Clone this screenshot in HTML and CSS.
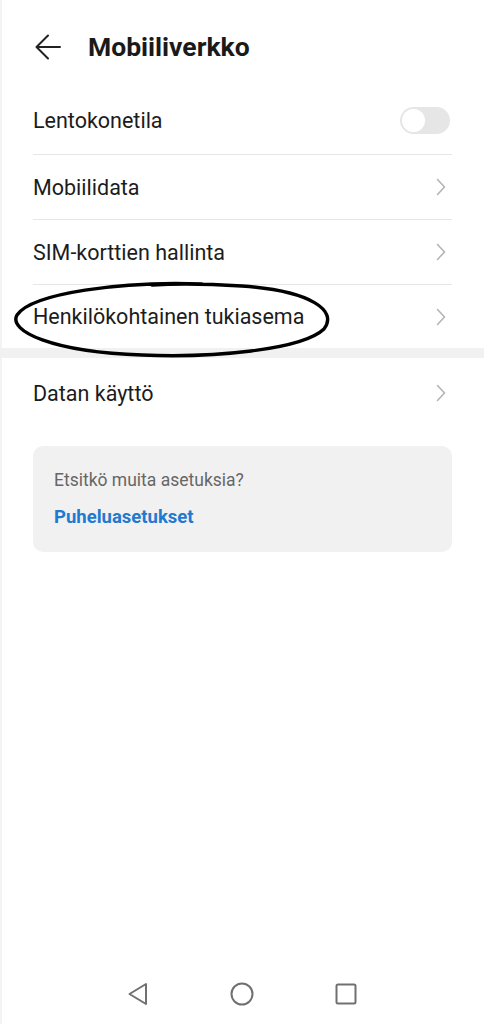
FILE: index.html
```html
<!DOCTYPE html>
<html lang="fi">
<head>
    <meta charset="UTF-8">
    <meta name="viewport" content="width=device-width, initial-scale=1.0">
    <title>Mobiiliverkko</title>
    <link rel="stylesheet" href="styles.css">
</head>
<body>
    <div class="screen">
        <div class="header">
            <svg class="back" width="26" height="26" viewBox="0 0 26 26">
                <path d="M25 13H2M13 1.5L1.5 13 13 24.5" fill="none" stroke="#222" stroke-width="2" stroke-linecap="round" stroke-linejoin="round"/>
            </svg>
            <h1>Mobiiliverkko</h1>
        </div>

        <div class="list">
            <div class="row first">
                <span>Lentokonetila</span>
                <div class="switch"><div class="knob"></div></div>
            </div>
            <div class="row">
                <span>Mobiilidata</span>
                <svg class="chev" width="10" height="18" viewBox="0 0 10 18"><path d="M1.5 1.5L8.5 9l-7 7.5" fill="none" stroke="#b4b4b4" stroke-width="1.6" stroke-linecap="round" stroke-linejoin="round"/></svg>
            </div>
            <div class="row">
                <span>SIM-korttien hallinta</span>
                <svg class="chev" width="10" height="18" viewBox="0 0 10 18"><path d="M1.5 1.5L8.5 9l-7 7.5" fill="none" stroke="#b4b4b4" stroke-width="1.6" stroke-linecap="round" stroke-linejoin="round"/></svg>
            </div>
            <div class="row last">
                <span>Henkilökohtainen tukiasema</span>
                <svg class="chev" width="10" height="18" viewBox="0 0 10 18"><path d="M1.5 1.5L8.5 9l-7 7.5" fill="none" stroke="#b4b4b4" stroke-width="1.6" stroke-linecap="round" stroke-linejoin="round"/></svg>
                <!-- hand drawn mark over the row -->
                <svg class="circle-mark" width="322" height="78" viewBox="0 0 322 78">
                    <path d="M190 3C110 0 20 12 5 34C-4 50 40 71 130 74C200 77 290 69 312 48C326 30 300 10 230 5C200 3 170 2 140 4" fill="none" stroke="#000" stroke-width="3.4" stroke-linecap="round"/>
                </svg>
            </div>
        </div>

        <div class="band"></div>

        <div class="list">
            <div class="row data">
                <span>Datan käyttö</span>
                <svg class="chev" width="10" height="18" viewBox="0 0 10 18"><path d="M1.5 1.5L8.5 9l-7 7.5" fill="none" stroke="#b4b4b4" stroke-width="1.6" stroke-linecap="round" stroke-linejoin="round"/></svg>
            </div>
        </div>

        <div class="hint">
            <p>Etsitkö muita asetuksia?</p>
            <a href="#">Puheluasetukset</a>
        </div>

        <div class="spacer"></div>

        <div class="navbar">
            <svg width="22" height="24" viewBox="0 0 22 24"><path d="M19 2v20L2.5 12z" fill="none" stroke="#707070" stroke-width="2" stroke-linejoin="round"/></svg>
            <svg width="24" height="24" viewBox="0 0 24 24"><circle cx="12" cy="12" r="10.5" fill="none" stroke="#707070" stroke-width="2"/></svg>
            <svg width="22" height="22" viewBox="0 0 22 22"><rect x="1.5" y="1.5" width="19" height="19" rx="1.5" fill="none" stroke="#707070" stroke-width="2"/></svg>
        </div>
    </div>
</body>
</html>
```

FILE: styles.css
```css
* {
    box-sizing: border-box;
    font-family: 'Roboto', 'Noto Sans', sans-serif;
}
body {
    margin: 0;
    background: #fff;
}
.screen {
    width: 484px;
    height: 1024px;
    display: flex;
    flex-direction: column;
    box-shadow: inset 2px 0 0 #f3f3f3;
}
.header {
    display: flex;
    align-items: center;
    height: 87px;
    padding-left: 35px;
}
.header + .list {
    margin-top: 0;
}
.back {
    margin-right: 27px;
    margin-top: 6px;
}
.header h1 {
    margin: 6px 0 0;
    font-size: 26.5px;
    font-weight: 700;
    color: #1a1a1a;
}
.list {
    padding: 0 32px 0 33px;
}
.row {
    position: relative;
    display: flex;
    align-items: center;
    justify-content: space-between;
    height: 65px;
    border-bottom: 1px solid #e6e6e6;
    font-size: 21.5px;
    color: #1c1c1c;
}
.row.first {
    height: 68px;
}
.row.last {
    border-bottom: none;
    height: 63px;
}
.row.data {
    border-bottom: none;
    height: 70px;
}
.chev {
    margin-right: 6px;
}
.switch {
    width: 50px;
    height: 27px;
    border-radius: 14px;
    background: #e6e6e6;
    padding: 2px;
    margin-right: 2px;
}
.knob {
    width: 23px;
    height: 23px;
    border-radius: 50%;
    background: #fff;
}
.circle-mark {
    position: absolute;
    left: -21px;
    top: -4px;
}
.band {
    height: 10px;
    background: #f1f1f1;
}
.hint {
    margin: 18px 32px 0 33px;
    background: #f1f1f1;
    border-radius: 10px;
    padding: 24px 21px 24px;
}
.hint p {
    margin: 0 0 16px;
    font-size: 17.5px;
    color: #666;
}
.hint a {
    font-size: 18.5px;
    font-weight: 700;
    color: #1f7ad0;
    text-decoration: none;
}
.spacer {
    flex: 1;
}
.navbar {
    display: flex;
    justify-content: center;
    align-items: center;
    gap: 81px;
    height: 58px;
    margin-bottom: 1px;
}
```
